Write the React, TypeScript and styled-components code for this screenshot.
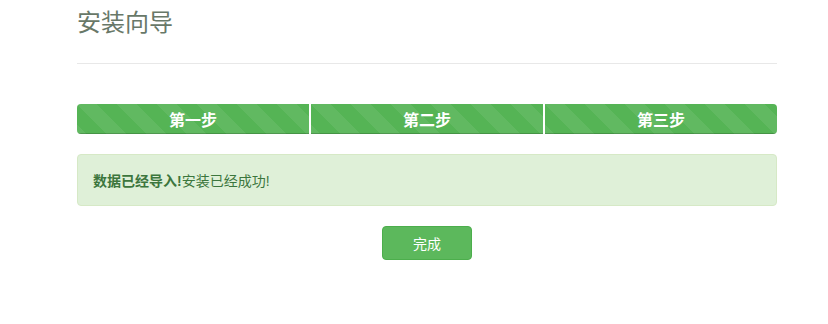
import React from "react";
import styled, { createGlobalStyle } from "styled-components";

const Global = createGlobalStyle`
  html, body { margin: 0; padding: 0; background: #fff; }
  body { font-family: "Liberation Sans", "Noto Sans CJK SC", sans-serif; font-size: 14px; color: #333; }
  * { box-sizing: border-box; }
`;

const Page = styled.div`
  width: 828px;
  height: 324px;
  padding: 0 51px 0 77px;
  overflow: hidden;
`;

const Title = styled.h1`
  margin: 0;
  padding-top: 9px;
  height: 64px;
  font-size: 24px;
  line-height: 28px;
  font-weight: 400;
  color: #687868;
  border-bottom: 1px solid #e8e8e8;
`;

const Progress = styled.div`
  margin-top: 40px;
  height: 30px;
  display: flex;
  border-radius: 4px;
  overflow: hidden;
  background: #f5f5f5;
`;

const Step = styled.div<{ $last?: boolean }>`
  flex: 1;
  display: flex;
  align-items: center;
  justify-content: center;
  background-color: #55b455;
  background-image: linear-gradient(45deg, rgba(255,255,255,.07) 25%, transparent 25%, transparent 50%, rgba(255,255,255,.07) 50%, rgba(255,255,255,.07) 75%, transparent 75%, transparent);
  background-size: 40px 40px;
  color: #fff;
  font-weight: 700;
  font-size: 16px;
  border-right: ${(p) => (p.$last ? "none" : "2px solid #fff")};
  box-shadow: inset 0 -1px 0 rgba(0,0,0,.18);
`;

const Alert = styled.div`
  margin-top: 20px;
  height: 52px;
  padding: 0 15px;
  display: flex;
  align-items: center;
  background: #dff0d8;
  border: 1px solid #d6e9c6;
  border-radius: 4px;
  color: #3c763d;
  font-size: 14px;
`;

const Strong = styled.strong`
  font-weight: 700;
`;

const Actions = styled.div`
  margin-top: 20px;
  display: flex;
  justify-content: center;
`;

const Button = styled.button`
  width: 90px;
  height: 34px;
  border: 1px solid #4cae4c;
  border-radius: 4px;
  background: #5cb85c;
  color: #fff;
  font-family: inherit;
  font-size: 14px;
  cursor: pointer;
`;

export default function App() {
  return (
    <>
      <Global />
      <Page>
        <Title>安装向导</Title>
        <Progress>
          <Step>第一步</Step>
          <Step>第二步</Step>
          <Step $last>第三步</Step>
        </Progress>
        <Alert>
          <Strong>数据已经导入!</Strong>安装已经成功!
        </Alert>
        <Actions>
          <Button>完成</Button>
        </Actions>
      </Page>
    </>
  );
}
